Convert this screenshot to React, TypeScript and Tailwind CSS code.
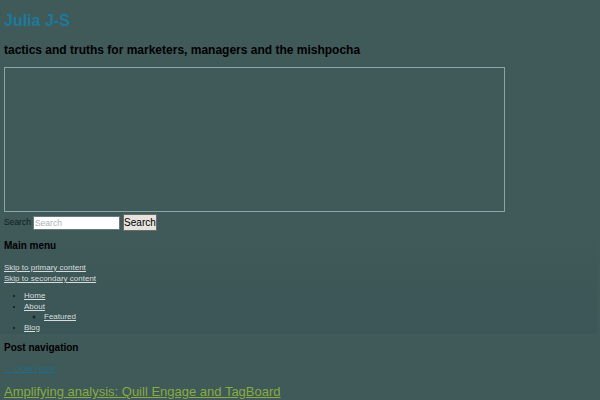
export default function App() {
  return (
    <div
      className="min-h-[400px] w-[600px] overflow-hidden bg-[#405959] px-1 text-black"
      style={{ fontFamily: '"Liberation Sans", Arial, sans-serif' }}
    >
      <header className="pt-[11px]">
        <h1 className="text-[16px] font-bold leading-[20px] text-[#1b7a9c]">Julia J-S</h1>
        <h2 className="mt-[11px] text-[12px] font-bold leading-[16px]">
          tactics and truths for marketers, managers and the mishpocha
        </h2>
      </header>

      <div className="mt-[9px] h-[145px] w-[501px] border border-[#8aa5a5]" />

      <form className="mt-[2px] flex items-center gap-[1px] text-[8.5px]">
        <label className="mr-[1px] text-[#102020]">Search</label>
        <input
          className="h-[14px] w-[87px] border border-[#6a7a7a] bg-white px-[1px] text-[8.5px] placeholder:text-[#a9b3b3]"
          placeholder="Search"
        />
        <button className="ml-[2px] h-[17px] w-[34px] border border-[#6a6a6a] bg-[#e6e2dc] text-[10px] text-black">
          Search
        </button>
      </form>

      <nav className="-mx-1 w-[597px] bg-gradient-to-b from-[#405959] to-[#3b5656] px-1 pb-[1px]">
        <h3 className="pt-[8px] text-[10px] font-bold leading-[14px]">Main menu</h3>
        <div className="mt-[9px] flex flex-col text-[8px] leading-[11px] text-[#d5dddd] underline">
          <a>Skip to primary content</a>
          <a>Skip to secondary content</a>
        </div>
        <ul className="mt-[7px] list-disc pl-[20px] text-[8px] leading-[10.5px] text-[#d5dddd] marker:text-[#0c1616]">
          <li>
            <a className="underline">Home</a>
          </li>
          <li>
            <a className="underline">About</a>
            <ul className="list-[circle] pl-[20px]">
              <li>
                <a className="underline">Featured</a>
              </li>
            </ul>
          </li>
          <li>
            <a className="underline">Blog</a>
          </li>
        </ul>
      </nav>

      <section>
        <h3 className="mt-[7px] text-[10px] font-bold leading-[14px]">Post navigation</h3>
        <a className="mt-[8px] block text-[8px] leading-[11px] text-[#1f6d88] underline">← Older posts</a>
        <h2 className="mt-[9px] text-[13px] leading-[17px] text-[#89ab40] underline">
          Amplifying analysis: Quill Engage and TagBoard
        </h2>
      </section>
    </div>
  );
}
